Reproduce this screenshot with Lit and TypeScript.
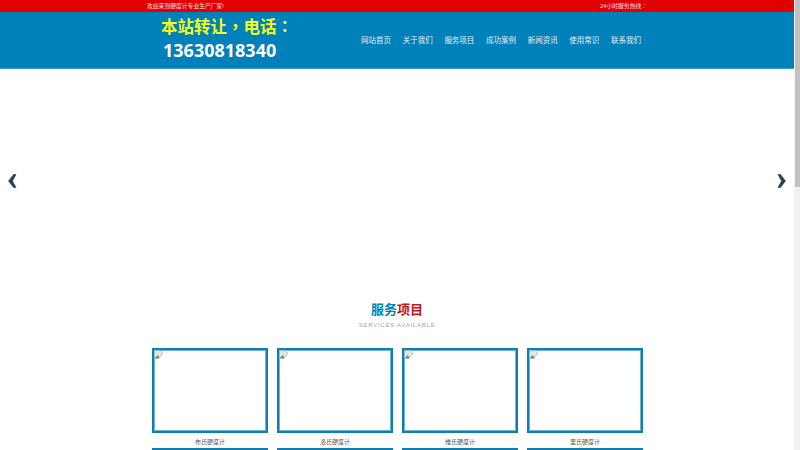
import { LitElement, html, css, svg } from "lit";
import { customElement } from "lit/decorators.js";

const NAV = ["网站首页", "关于我们", "服务项目", "成功案例", "新闻资讯", "使用常识", "联系我们"];
const ITEMS = ["布氏硬度计", "洛氏硬度计", "维氏硬度计", "里氏硬度计"];

const broken = svg`<svg class="broken" width="9" height="9" viewBox="0 0 8 8">
  <path d="M0.5 0.5H5.5L7.5 2.5V4L4 7.5H0.5Z" fill="#dfe7ee" stroke="#a9b4bd" stroke-width=".6"/>
  <path d="M1 7L3 4.5L5 6.5L4 7.5H1Z" fill="#5aa64a"/>
</svg>`;

@customElement("app-root")
export class AppRoot extends LitElement {
  static styles = css`
    :host {
      display: flex;
      width: 800px;
      height: 450px;
      overflow: hidden;
      background: #fff;
      font-family: "Liberation Sans", "Noto Sans CJK SC", sans-serif;
    }
    .page { width: 794px; flex: none; }
    .scrollbar { flex: 1; background: #f1f1f1; padding: 0 0 0 1px; }
    .thumb { height: 187px; background: #c1c1c1; }
    .top { height: 12px; background: #e10000; color: #f6e0e0; font-size: 5.8px; line-height: 12px; }
    .wrap { width: 500px; margin: 0 auto; }
    .top .wrap { display: flex; justify-content: space-between; box-sizing: border-box; }
    .top .right { width: 47px; white-space: nowrap; }
    .head { height: 57px; background: #0081b9; border-bottom: 1px solid #3d9fcb; box-sizing: border-box; }
    .head .wrap { height: 100%; display: flex; justify-content: space-between; align-items: center; box-sizing: border-box; }
    .logo { padding: 0 0 3px 14px; font-weight: bold; white-space: nowrap; }
    .l1 { color: #f5fb1e; font-size: 16.5px; line-height: 23px; }
    .punct { font-family: "Noto Sans CJK TC", sans-serif; }
    .l2 { color: #fff; font-family: "Noto Sans", sans-serif; font-size: 18px; line-height: 23px; padding-left: 2px; }
    nav { display: flex; gap: 11.67px; padding: 2px 6px 0 0; color: #e0eff6; font-size: 7.5px; line-height: 12px; white-space: nowrap; }
    .hero {
      height: 223px;
      padding: 0 8px;
      display: flex;
      justify-content: space-between;
      align-items: center;
      box-sizing: border-box;
    }
    .hero svg { display: block; margin-top: 1px; }
    .title { text-align: center; padding-top: 9px; font-size: 13px; line-height: 18px; font-weight: bold; color: #0081b9; }
    .title span { color: #c8161d; }
    .sub { text-align: center; color: #a6a6a6; font-size: 6px; line-height: 10px; letter-spacing: 0.75px; margin-top: 1px; }
    .grid { width: 491px; margin: 18px auto 0; padding-left: 1px; display: grid; grid-template-columns: repeat(4, 116px); gap: 0 9px; }
    .pic { height: 85px; box-sizing: border-box; border: 2px solid #0f7fb3; box-shadow: inset 0 0 0 1px #6fb3d2; }
    .broken { display: block; }
    .cap { text-align: center; font-size: 6px; line-height: 10px; color: #555; padding: 4px 0 1px; }
  `;

  render() {
    return html`
      <div class="page">
        <div class="top"><div class="wrap"><span>欢迎来到硬度计专业生产厂家!</span><span class="right">24小时服务热线<span class="punct">：</span></span></div></div>
        <header class="head"><div class="wrap">
          <div class="logo"><div class="l1">本站转让<span class="punct">，</span>电话<span class="punct">：</span></div><div class="l2">13630818340</div></div>
          <nav>${NAV.map((n) => html`<span>${n}</span>`)}</nav>
        </div></header>
        <section class="hero">
          <svg width="10" height="14" viewBox="0 0 10 14"><path d="M8 0.5H5.5L0.5 7L5.5 13.5H8L4.5 7Z" fill="#2c3e50" stroke="#2c3e50" stroke-width=".6"/></svg>
          <svg width="10" height="14" viewBox="0 0 10 14"><path d="M2 0.5H4.5L9.5 7L4.5 13.5H2L5.5 7Z" fill="#2c3e50" stroke="#2c3e50" stroke-width=".6"/></svg>
        </section>
        <div class="title">服务<span>项目</span></div>
        <div class="sub">SERVICES AVAILABLE</div>
        <div class="grid">
          ${ITEMS.map((t) => html`<div><div class="pic">${broken}</div><div class="cap">${t}</div></div>`)}
          ${ITEMS.map(() => html`<div><div class="pic"></div></div>`)}
        </div>
      </div>
      <div class="scrollbar"><div class="thumb"></div></div>
    `;
  }
}
